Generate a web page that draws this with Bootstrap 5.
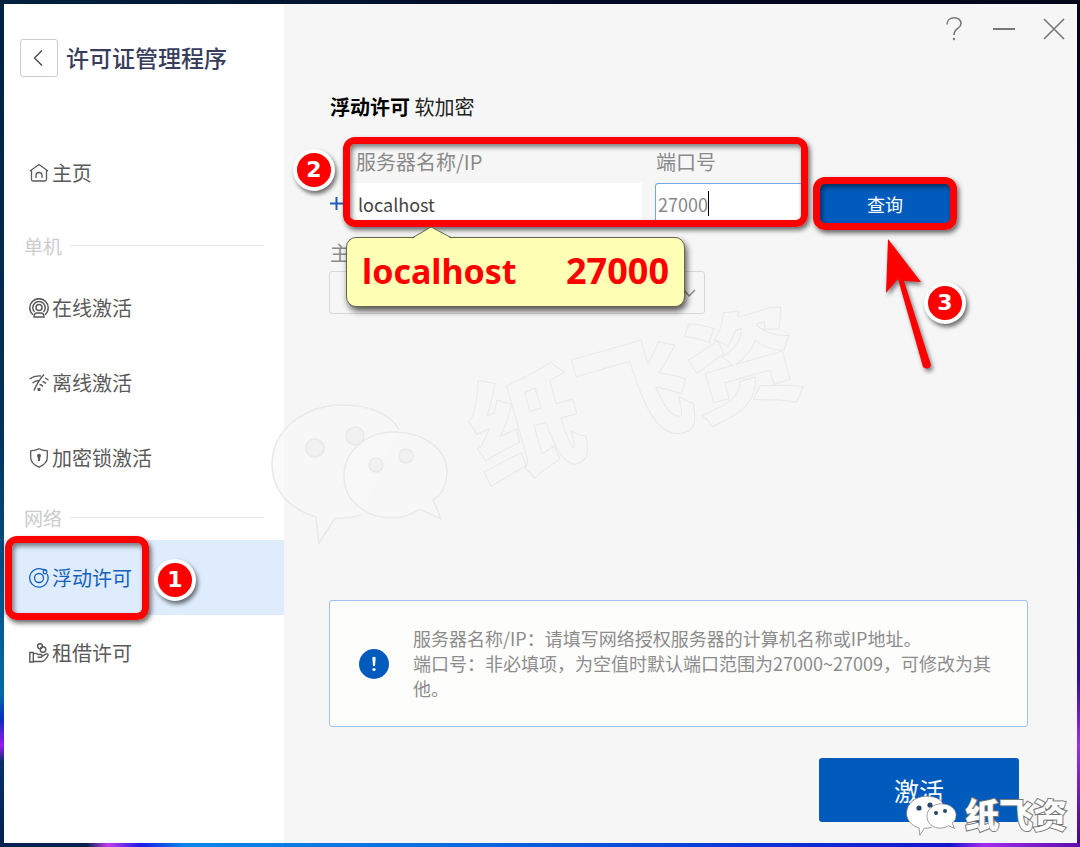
<!DOCTYPE html>
<html lang="zh-CN">
<head>
<meta charset="utf-8">
<meta name="viewport" content="width=device-width, initial-scale=1">
<title>许可证管理程序</title>
<link href="https://cdn.jsdelivr.net/npm/bootstrap@5.3.0/dist/css/bootstrap.min.css" rel="stylesheet">
<style>
  :root { --brand: #005bbd; --mark-red: #f00; }
  body {
    font-family: "Noto Sans CJK SC", sans-serif;
    font-size: 20px;
    line-height: 30px;
    color: #5a5a5a;
    padding: 4px 3px 4px 4px;
    background:
      linear-gradient(90deg, #04204f 0 8%, #c23bf0 10%, #1a1ae8 13%, #0a84e8 17%, #0a6fe0 40%, #0a35d8 70%, #1414d0 88%, #a32af0 91%, #5a0fa8 100%) bottom / 100% 4px no-repeat,
      linear-gradient(90deg, #00213f, #020a26 50%, #050518) top / 100% 4px no-repeat,
      linear-gradient(180deg, #00213f 0, #003058 50%, #006aa8 82%, #0a2bc0 85%, #9a1af0 88%, #04306b 90%, #04204f 100%) left / 4px 100% no-repeat,
      linear-gradient(180deg, #050518 0, #0a0a40 60%, #2a10a0 80%, #a32af0 88%, #3a0a80 100%) right / 3px 100% no-repeat;
  }
  .app-window { min-height: calc(100vh - 8px); background: #f6f6f6; }
  .side-pane { width: 280px; background: #fff; padding: 35px 0 40px; }
  .app-title { font-size: 23px; line-height: 36px; font-weight: 500; color: #383d5c; }
  .back-btn { width: 38px; height: 38px; border: 1px solid #ccc; border-radius: 3px; background: #fff; margin-left: 16px; margin-right: 8px; }
  .side-menu { margin-top: 58px; }
  .side-menu .nav-link { height: 75px; padding: 0 0 0 25px; color: #5a5a5a; gap: 3px; }
  .side-menu .nav-link svg { width: 20px; height: 20px; }
  .side-menu .nav-link.active { background: #deecfd; color: #1460bd; }
  .menu-group { height: 45px; padding: 0 20px; color: #ccc; font-size: 19px; gap: 8px; }
  .menu-group.first-group { margin: 13px 0 2px; }
  .menu-group::after { content: ""; flex: 1; border-top: 1px solid #ebebeb; }
  .main-pane { padding: 0 49px 21px 46px; min-width: 0; }
  .window-controls { height: 48px; gap: 26px; margin-right: -38px; color: #777; }
  .window-controls button { width: 24px; height: 24px; }
  .bare-btn { border: 0; background: none; padding: 0; color: inherit; line-height: 1; }
  .page-head { font-size: 20px; line-height: 30px; color: #222; margin: 40px 0 15px; font-weight: 400; }
  .page-head strong { color: #000; }
  .add-btn { width: 13px; margin-top: 60px; color: #1d5fb8; }
  .field-set { flex: 0 1 465px; height: 90px; padding: 7px; gap: 13px; }
  .field-set label, .host-label { color: #8a8a8a; }
  .field-set label { line-height: 36px; padding-left: 6px; margin-bottom: 3px; }
  .field-set .form-control { height: 37px; border-radius: 0; padding: 5px 8px 0; font-size: 18px; line-height: 30px; color: #444; border: 0; }
  .port-field { flex: 0 0 146px; }
  .field-set .port-field label { padding-left: 1px; }
  .field-set .port-field .form-control { border: solid #71a7e4; border-width: 1px 0 0 1px; padding: 4px 2px 0; color: #888; border-radius: 3px 0 0 0; }
  .text-caret { left: 53px; bottom: 4px; width: 1px; height: 25px; background: #000; }
  .red-frame::after {
    content: ""; position: absolute; inset: 0; pointer-events: none;
    border: 7px solid var(--mark-red); border-radius: 12px;
    box-shadow: 2px 3px 5px rgba(0,0,0,.6), inset 2px 3px 5px rgba(0,0,0,.5);
  }
  .query-box { width: 144px; height: 53px; padding: 7px; margin: 40px 0 0 5px; }
  .brand-btn { background: var(--brand); color: #fff; border: 0; border-radius: 3px; }
  .query-box .brand-btn { font-size: 18px; line-height: 30px; border-radius: 0; }
  .step-dot {
    position: absolute; width: 42px; height: 42px; border: 4px solid #fff; border-radius: 50%;
    background: var(--mark-red); color: #fff; text-align: center; z-index: 2;
    font: 700 22px/34px "DejaVu Sans", sans-serif; box-shadow: 2px 3px 4px rgba(0,0,0,.55);
  }
  .step-one { left: 150px; top: 19px; }
  .step-two { left: -50px; top: 12px; }
  .step-three { left: 111px; top: 105px; }
  .menu-frame { left: 1px; top: -4px; width: 144px; height: 84px; }
  .arrow-mark { left: 65px; top: 57px; filter: drop-shadow(2px 3px 2px rgba(0,0,0,.5)); }
  .tip-note {
    left: 3px; top: 100px; width: 339px; height: 70px; padding: 0 15px; z-index: 3;
    background: #ffffb5; border: 1px solid #66664a; border-radius: 10px;
    box-shadow: 2px 4px 6px rgba(0,0,0,.65);
    color: var(--mark-red); font: 700 36px/66px "Noto Sans", sans-serif;
  }
  .tip-note .host-word { font-size: 34px; }
  .tip-note svg { left: 65px; top: -12px; }
  .host-label { margin-top: 8px; margin-bottom: 3px; }
  .host-select {
    max-width: 376px; height: 43px; border: 1px solid #d8d8d8; border-radius: 3px; margin-left: -1px;
    background: #f6f6f6 url("data:image/svg+xml,%3csvg xmlns='http://www.w3.org/2000/svg' viewBox='0 0 16 16'%3e%3cpath fill='none' stroke='%23888' stroke-width='1.500' d='m3 5 5 6 6-6'/%3e%3c/svg%3e") right 7px center / 16px 16px no-repeat;
  }
  .info-card { background: #fdfdfc; border: 1px solid #9cc3ec; border-radius: 3px; margin-left: -1px; padding: 25px 32px 25px 29px; gap: 24px; font-size: 18px; line-height: 25px; color: #8c8c8c; }
  .activate-btn { width: 200px; height: 64px; margin: 31px 9px 0 0; font-size: 25px; line-height: 36px; }
  .ghost-mark { left: 266px; top: 246px; pointer-events: none; }
  .ghost-mark text { font: 900 113px "Noto Sans CJK SC", sans-serif; }
  .sign-mark { right: 5px; bottom: 0; gap: 7px; pointer-events: none; }
  .sign-mark text { font: 900 34px "Noto Sans CJK SC", sans-serif; }
  .sign-mark .eyes { display: none; }
</style>
</head>
<body>
<svg width="0" height="0" class="position-absolute" aria-hidden="true">
  <symbol id="chat-shape" viewBox="270 403 180 144">
    <path d="M399 430C391 414 369 405 343 405C303 405 272 431 272 465C272 488 287 508 316 517L319 543L335 518Q348 519 361 515"/>
    <path d="M395 432C366 432 344 451 344 476C344 501 366 518 392 518Q407 518 420 509L441 519L433 500Q447 491 447 472C447 449 423 432 395 432Z"/>
  </symbol>
</svg>

<div class="app-window d-flex position-relative">
  <aside class="side-pane flex-shrink-0">
    <header class="d-flex align-items-start">
      <button class="back-btn p-0 d-flex align-items-center justify-content-center" type="button" aria-label="返回">
        <svg width="12" height="18" viewBox="0 0 12 18" fill="none" stroke="#444" stroke-width="1.3"><path d="M9 1.500L1.500 9L9 16.500"/></svg>
      </button>
      <h1 class="app-title m-0">许可证管理程序</h1>
    </header>
    <nav class="side-menu nav flex-column">
      <a class="nav-link d-flex align-items-center" href="#">
        <svg viewBox="0 0 20 20" fill="none" stroke="currentColor" stroke-width="1.300"><path d="M1 8L10 1.500L19 8M2.500 7.200V16.500Q2.500 18 4 18H16Q17.500 18 17.500 16.500V7.200M7 15V12.500Q7 9.500 10 9.500T13 12.500V15"/></svg>
        <span>主页</span>
      </a>
      <div class="menu-group first-group d-flex align-items-center">单机</div>
      <a class="nav-link d-flex align-items-center" href="#">
        <svg viewBox="0 0 20 20" fill="none" stroke="currentColor" stroke-width="1.500"><circle cx="10" cy="9.500" r="3"/><path d="M5.500 14A6.200 6.200 0 1 1 14.500 14M4 16.800A9.200 9.200 0 1 1 16 16.800M5 19Q5 15 8 15H12Q15 15 15 19Z"/></svg>
        <span>在线激活</span>
      </a>
      <a class="nav-link d-flex align-items-center" href="#">
        <svg viewBox="0 0 20 20" fill="none" stroke="currentColor" stroke-width="1.400"><path d="M.5 6Q6 2.200 12 3M16 5L19.500 7M3.500 10Q7 7.200 10.500 7.500M13.500 8.500Q15.500 9 17 10.500M15 1.500Q9 8 5 17.500M10.500 11.500Q12.500 11.500 14 13.500"/><circle cx="10" cy="16.500" r="1" fill="currentColor"/></svg>
        <span>离线激活</span>
      </a>
      <a class="nav-link d-flex align-items-center" href="#">
        <svg viewBox="0 0 20 20" fill="none" stroke="currentColor" stroke-width="1.300"><path d="M10 .8Q13 2.500 18.300 2.800V9.500Q18.300 15.500 10 19.200Q1.700 15.500 1.700 9.500V2.800Q7 2.500 10 .8Z"/><circle cx="10" cy="7.800" r="1.300" fill="currentColor"/><path d="M10 8V13" stroke-width="2.200"/></svg>
        <span>加密锁激活</span>
      </a>
      <div class="menu-group d-flex align-items-center">网络</div>
      <div class="position-relative">
        <a class="nav-link active d-flex align-items-center" href="#" aria-current="page">
          <svg viewBox="0 0 20 20" fill="none" stroke="currentColor" stroke-width="1.300"><path d="M14 1.700A9.200 9.200 0 1 0 18.200 6"/><circle cx="10" cy="10" r="4.500"/><circle cx="16" cy="4" r="1.800"/><path d="M14 1.700Q16 1 18 3"/></svg>
          <span>浮动许可</span>
        </a>
        <span class="red-frame menu-frame position-absolute"></span>
        <span class="step-dot step-one">1</span>
      </div>
      <a class="nav-link d-flex align-items-center" href="#">
        <svg viewBox="0 0 20 20" fill="none" stroke="currentColor" stroke-width="1.400"><path d="M.8 9.500H4.300V19H.8ZM4.300 11Q7 9.500 9 11.500H12.500Q14 13.500 12 14.300H8.500M13 13.500L17 11Q19.500 10.500 19 12.500Q16 18.300 12.500 18.500H4.300"/><circle cx="11" cy="3.200" r="2.400"/><circle cx="14" cy="6.500" r="2.800"/></svg>
        <span>租借许可</span>
      </a>
    </nav>
  </aside>

  <main class="main-pane flex-grow-1 d-flex flex-column">
    <div class="window-controls d-flex align-items-center justify-content-end">
      <button class="bare-btn" type="button" aria-label="帮助"><svg width="24" height="24" viewBox="0 0 24 24" fill="none" stroke="currentColor" stroke-width="1.600"><path d="M5 7.500C5-1.500 19-1 19 6.500C19 12 12 11 12 18"/><circle cx="12" cy="22" r=".9" fill="currentColor" stroke-width=".8"/></svg></button>
      <button class="bare-btn" type="button" aria-label="最小化"><svg width="24" height="24" viewBox="0 0 24 24" stroke="currentColor" stroke-width="2"><path d="M1 12H23"/></svg></button>
      <button class="bare-btn" type="button" aria-label="关闭"><svg width="24" height="24" viewBox="0 0 24 24" stroke="currentColor" stroke-width="1.600"><path d="M2 2L22 22M22 2L2 22"/></svg></button>
    </div>

    <h2 class="page-head"><strong>浮动许可</strong> 软加密</h2>

    <div class="d-flex align-items-start">
      <button class="bare-btn add-btn d-flex" type="button" aria-label="添加"><svg width="13" height="13" viewBox="0 0 13 13" stroke="currentColor" stroke-width="2"><path d="M0 6.500H13M6.500 0V13"/></svg></button>
      <div class="field-set red-frame position-relative d-flex">
        <div class="flex-grow-1">
          <label class="d-block" for="server">服务器名称/IP</label>
          <input class="form-control" id="server" type="text" value="localhost">
        </div>
        <div class="port-field position-relative">
          <label class="d-block" for="port">端口号</label>
          <input class="form-control" id="port" type="text" value="27000">
          <span class="text-caret position-absolute"></span>
        </div>
        <span class="step-dot step-two">2</span>
        <div class="tip-note position-absolute d-flex justify-content-between">
          <svg class="position-absolute" width="40" height="13" viewBox="0 0 40 13"><path d="M0 13L19 1L40 13" fill="#ffffb5"/><path d="M0 12L19 1L40 12" fill="none" stroke="#66664a"/></svg>
          <span class="host-word">localhost</span><span>27000</span>
        </div>
      </div>
      <div class="query-box red-frame position-relative flex-shrink-0">
        <button class="btn brand-btn w-100 h-100 p-0" type="button">查询</button>
        <svg class="arrow-mark position-absolute" width="60" height="140" viewBox="878 234 60 140" fill="#f00"><path d="M888 239L921 282L904 281L931 365Q929 371 923 367L898 279L886 293Z"/></svg>
        <span class="step-dot step-three">3</span>
      </div>
    </div>

    <label class="host-label" for="host">主</label>
    <select class="form-select host-select" id="host"><option></option></select>

    <section class="info-card d-flex align-items-center mt-auto">
      <svg class="flex-shrink-0" width="30" height="30" viewBox="0 0 30 30"><circle cx="15" cy="15" r="15" fill="#005bbd"/><path d="M13.300 8.500Q15 7 16.700 8.500L16 17H14Z" fill="#fff"/><circle cx="15" cy="20.500" r="1.600" fill="#fff"/></svg>
      <p class="m-0">服务器名称/IP：请填写网络授权服务器的计算机名称或IP地址。<br>端口号：非必填项，为空值时默认端口范围为27000~27009，可修改为其他。</p>
    </section>
    <button class="btn brand-btn activate-btn align-self-end" type="button">激活</button>
  </main>

  <svg class="ghost-mark position-absolute" width="600" height="340" viewBox="270 250 600 340" fill="none" stroke="#e9e9e9" stroke-width="1.500">
    <use href="#chat-shape" x="270" y="403" width="180" height="144" fill="#f8f8f8" fill-opacity=".7"/>
    <g fill="#f1f1f1"><circle cx="315" cy="448" r="9"/><circle cx="355" cy="436" r="9"/><circle cx="376" cy="465" r="7"/><circle cx="406" cy="456" r="7"/></g>
    <text transform="translate(483 481) rotate(-16)" stroke-width="1">纸飞资</text>
  </svg>
  <div class="sign-mark position-absolute d-flex align-items-center">
    <svg width="51" height="42" viewBox="0 0 51 42" fill="#fff" stroke="#777" stroke-width="2.500">
      <use href="#chat-shape" width="51" height="42"/>
      <g fill="#24476b" stroke="none"><circle cx="13" cy="13" r="2.600"/><circle cx="24" cy="10" r="2.600"/><circle cx="30" cy="18" r="2"/><circle cx="39" cy="16" r="2"/></g>
    </svg>
    <svg width="108" height="54" viewBox="0 0 108 54"><text x="1" y="39" fill="#fff" stroke="#777" stroke-width="2" paint-order="stroke">纸飞资</text></svg>
  </div>
</div>
<script src="https://cdn.jsdelivr.net/npm/bootstrap@5.3.0/dist/js/bootstrap.bundle.min.js"></script>
</body>
</html>
